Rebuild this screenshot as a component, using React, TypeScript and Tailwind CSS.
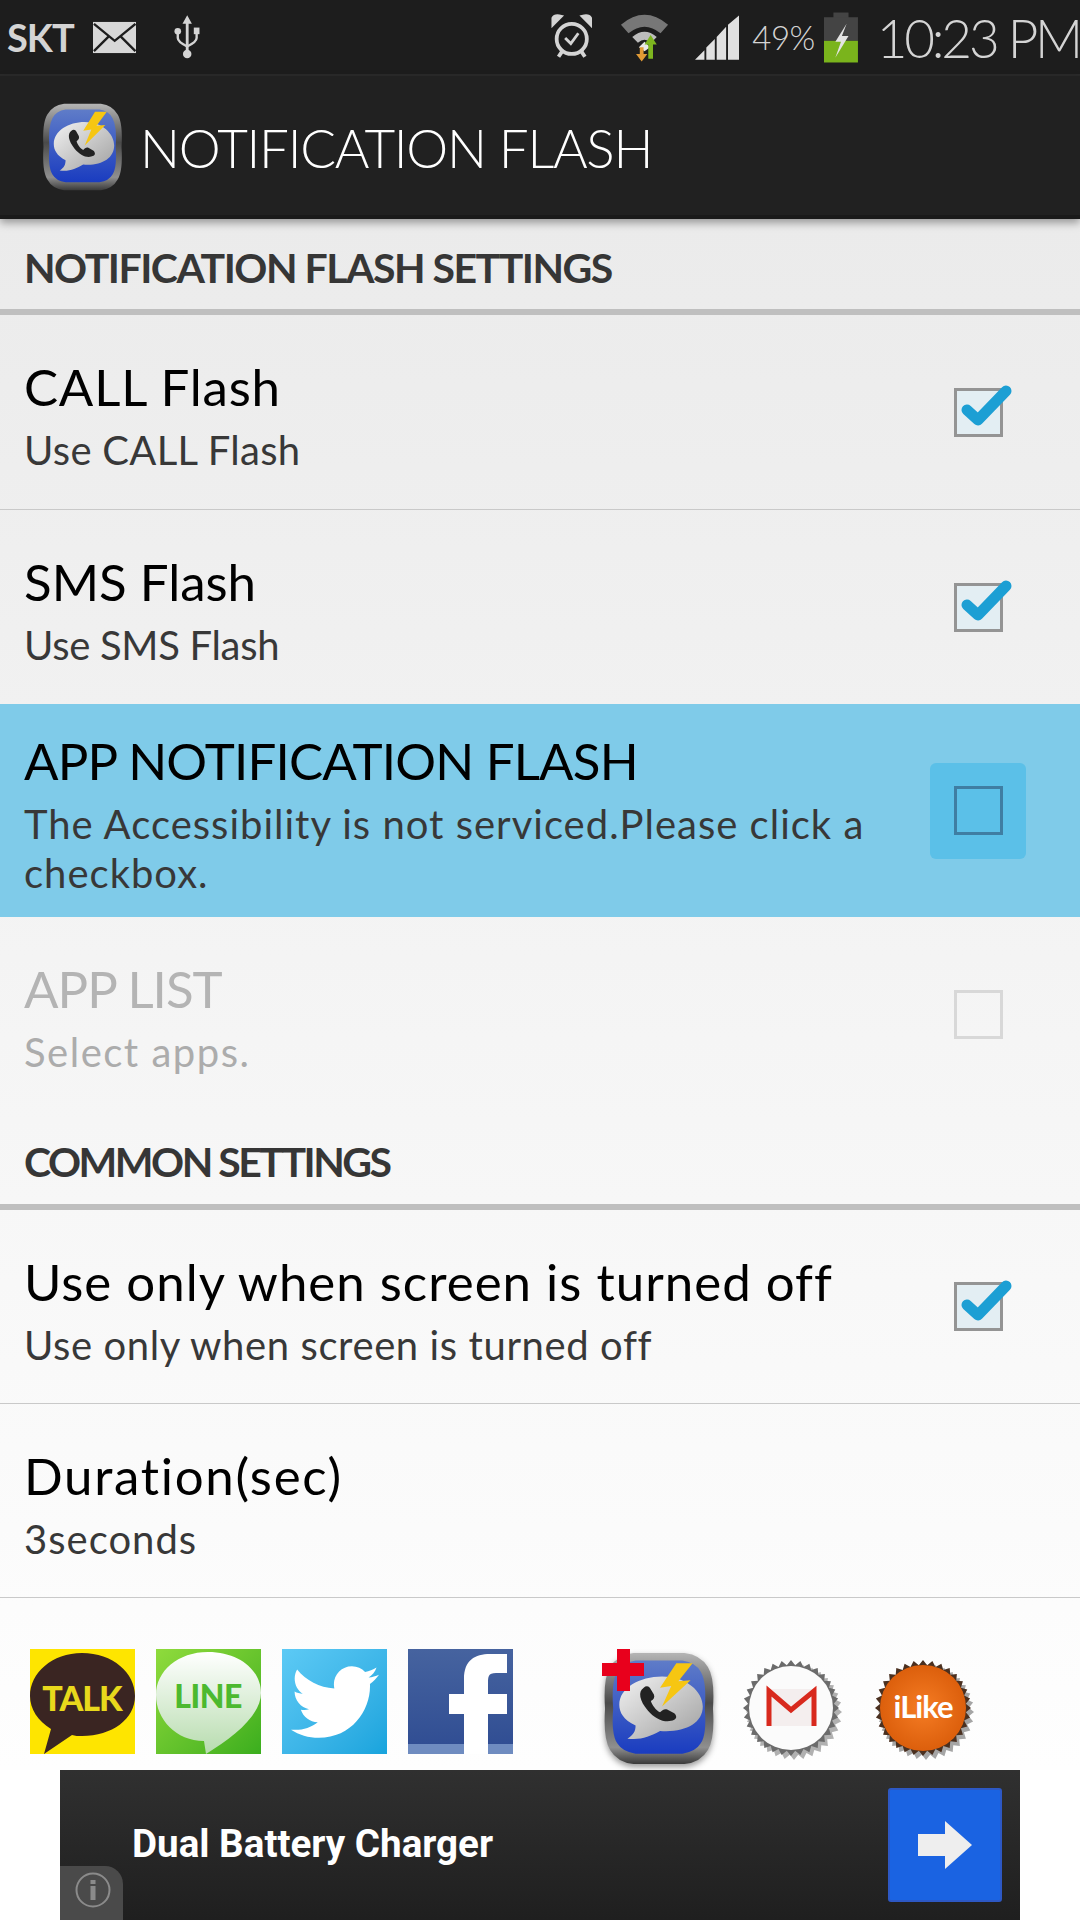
import React from "react";
import { FaTwitter } from "react-icons/fa";

const font = "font-['Lato','Liberation_Sans',sans-serif]";

function AppLogo({ className, id }: { className?: string; id: string }) {
  return (
    <svg viewBox="0 0 110 120" preserveAspectRatio="none" className={className}>
      <defs>
        <linearGradient id={`rim${id}`} x1="0" y1="0" x2="0" y2="1">
          <stop offset="0" stopColor="#b5b5b5" />
          <stop offset="0.45" stopColor="#4a4a4a" />
          <stop offset="0.85" stopColor="#8f8f8f" />
          <stop offset="1" stopColor="#3a3a3a" />
        </linearGradient>
        <linearGradient id={`blue${id}`} x1="0" y1="0" x2="0" y2="1">
          <stop offset="0" stopColor="#5f7cc8" />
          <stop offset="1" stopColor="#1a3cc0" />
        </linearGradient>
        <linearGradient id={`bubble${id}`} x1="0" y1="0" x2="1" y2="1">
          <stop offset="0" stopColor="#f2f2f2" />
          <stop offset="1" stopColor="#a0a0a0" />
        </linearGradient>
      </defs>
      <path d="M30 1H80Q96 3 103 16Q110 28 108 60Q110 92 103 104Q96 117 80 119H30Q14 117 7 104Q0 92 2 60Q0 28 7 16Q14 3 30 1Z" fill={`url(#rim${id})`} />
      <path d="M32 9H78Q91 11 96 21Q102 32 100 60Q102 88 96 97Q91 106 78 108H32Q19 106 14 97Q8 88 10 60Q8 32 14 21Q19 11 32 9Z" fill={`url(#blue${id})`} />
      <path d="M58 26C82 26 98 42 98 58C98 76 80 86 56 84C46 90 36 94 24 92C30 88 32 84 32 78C20 72 16 64 16 56C16 38 36 26 58 26Z" fill={`url(#bubble${id})`} />
      <path d="M40 38C34 42 36 52 44 62C52 72 62 76 70 72C73 70 72 67 70 65L63 61C60 60 58 62 56 64C52 62 48 56 47 52C50 50 51 48 50 45L46 38C44 36 42 36 40 38Z" fill="#222" />
      <path d="M72 12L56 38L67 36L58 58L86 30L74 31L88 12Z" fill="#f6c612" />
    </svg>
  );
}

function capPoints(teeth: number, outer: number, inner: number) {
  const pts: string[] = [];
  for (let i = 0; i < teeth * 2; i++) {
    const r = i % 2 === 0 ? outer : inner;
    const a = (Math.PI * i) / teeth;
    pts.push(`${(50 + r * Math.cos(a)).toFixed(1)},${(50 + r * Math.sin(a)).toFixed(1)}`);
  }
  return pts.join(" ");
}

function GmailCap() {
  return (
    <svg viewBox="0 0 104 104" className="w-[104px] h-[104px] ml-[26px] mt-[9px]">
      <polygon points={capPoints(32, 48, 43)} fill="#000" opacity="0.3" transform="translate(3 4)" />
      <polygon points={capPoints(32, 48, 43)} fill="#6b6b6b" />
      <circle cx="50" cy="50" r="42" fill="#fbfbfb" />
      <rect x="26" y="31" width="49" height="37" fill="#f4eeee" />
      <path d="M28 68V33L50 52L73 33V68" fill="none" stroke="#d8291d" strokeWidth="5" />
    </svg>
  );
}

function ILikeCap() {
  return (
    <svg viewBox="0 0 104 104" className="w-[104px] h-[104px] ml-[28px] mt-[9px]">
      <defs>
        <radialGradient id="orange">
          <stop offset="0" stopColor="#f57c24" />
          <stop offset="1" stopColor="#dc5f0c" />
        </radialGradient>
      </defs>
      <polygon points={capPoints(32, 48, 43)} fill="#000" opacity="0.35" transform="translate(3 4)" />
      <polygon points={capPoints(32, 48, 43)} fill="#4a3020" />
      <circle cx="50" cy="50" r="43" fill="url(#orange)" />
      <text x="50" y="60" textAnchor="middle" fontFamily="Lato, sans-serif" fontWeight="700" fontSize="31" letterSpacing="-1" fill="#fff">iLike</text>
    </svg>
  );
}

function Check({ on, dim, active }: { on?: boolean; dim?: boolean; active?: boolean }) {
  const border = active ? "border-[#3f7ea3]" : dim ? "border-[#d8d8d8]" : "border-[#949494]";
  return (
    <div className={`relative w-[96px] h-[96px] flex items-center justify-center rounded-md ${active ? "bg-[#5bc0e8]" : ""}`}>
      <div className={`w-[49px] h-[49px] border-[3px] ${border} ${on ? "bg-[#e3eef3]" : ""}`} />
      {on && (
        <svg viewBox="0 0 56 44" className="absolute left-[29px] top-[18px] w-[56px] h-[44px]">
          <path d="M8 28L19 38L47 9" fill="none" stroke="#1c9fd4" strokeWidth="11" strokeLinecap="round" strokeLinejoin="round" />
        </svg>
      )}
    </div>
  );
}

function Row({ title, sub, h, on, dim, active, line, check = true, tt, st }: {
  title: string; sub: string; h: string; on?: boolean; dim?: boolean; active?: boolean; line?: boolean; check?: boolean; tt: string; st: string;
}) {
  return (
    <div className={`${h} flex items-center pl-[24px] pr-[54px] ${line ? "border-b border-[#c9c9c9]" : ""} ${active ? "bg-[#7fcbe9]" : ""}`}>
      <div className="flex-1 min-w-0 pt-[7px]">
        <div className={`text-[51px] leading-[62px] ${tt} ${dim ? "text-[#b4b4b4]" : "text-black"}`}>{title}</div>
        <div className={`text-[40px] leading-[49px] mt-[8px] ${st} ${dim ? "text-[#acacac]" : "text-[#383838]"}`}>{sub}</div>
      </div>
      {check && <Check on={on} dim={dim} active={active} />}
    </div>
  );
}

function SectionHead({ text, h, className }: { text: string; h: string; className: string }) {
  return (
    <div className={`${h} flex items-end pl-[24px] border-b-[6px] border-[#bfbfbf] ${className}`}>
      <span className="text-[41px] leading-[48px] font-bold text-[#363636]">{text}</span>
    </div>
  );
}

function StatusBar() {
  return (
    <div className="h-[76px] bg-[#1d1d1d] border-b-2 border-[#2a2a2a] flex items-center text-[#d4d4d4] overflow-hidden">
      <span className="ml-[7px] text-[38px] font-bold leading-none tracking-[-1px]">SKT</span>
      <svg viewBox="0 0 46 33" className="ml-[19px] w-[46px] h-[33px]">
        <rect width="46" height="33" fill="#d8d8d8" />
        <path d="M1 2L23 20L45 2M1 31L17 15M45 31L29 15" fill="none" stroke="#1d1d1d" strokeWidth="2.5" />
      </svg>
      <svg viewBox="0 0 28 46" className="ml-[38px] w-[28px] h-[46px]">
        <path d="M14 0L19 9H9ZM12.5 8H15.5V38H12.5Z" fill="#d4d4d4" />
        <circle cx="14" cy="41" r="4.5" fill="#d4d4d4" />
        <circle cx="4" cy="17" r="3.5" fill="#d4d4d4" />
        <rect x="21" y="13" width="6" height="7" fill="#d4d4d4" />
        <path d="M4 19V24Q4 28 14 33Q24 28 24 24V18" fill="none" stroke="#d4d4d4" strokeWidth="2.5" />
      </svg>
      <svg viewBox="0 0 44 50" className="ml-[351px] w-[44px] h-[50px]">
        <circle cx="22" cy="27" r="16" fill="none" stroke="#d4d4d4" strokeWidth="4" />
        <path d="M2 12L11 3Q4 1 2 5ZM42 12L33 3Q40 1 42 5Z" fill="#d4d4d4" stroke="#d4d4d4" strokeWidth="3" />
        <path d="M8 46L12 40M36 46L32 40" stroke="#d4d4d4" strokeWidth="4" />
        <path d="M15 26L21 32L29 21" fill="none" stroke="#d4d4d4" strokeWidth="3" />
      </svg>
      <svg viewBox="0 0 52 52" className="ml-[27px] w-[52px] h-[52px]">
        <path d="M1 13Q26 -8 51 13L43 22Q26 8 9 22Z" fill="#777" />
        <path d="M13 26Q26 15 39 26L33 32Q26 26 19 32Z" fill="#bdbdbd" />
        <path d="M26 31L32 37L26 41L20 37Z" fill="#e8e8e8" />
        <path d="M21 37H25V44H29L23 52L17 44H21Z" fill="#e19a35" />
        <path d="M30 49V34H26L32.5 24L39 34H35V49Z" fill="#7db51f" />
      </svg>
      <svg viewBox="0 0 47 47" className="ml-[26px] w-[47px] h-[47px]">
        <path d="M0 47L10 37V47ZM12 34L21 25V47H12ZM23 23L33 12V47H23ZM35 10L47 0V47H35Z" fill="#e0e0e0" />
      </svg>
      <span className="ml-[13px] text-[33px] font-light leading-none tracking-[-0.5px]">49%</span>
      <svg viewBox="0 0 36 53" className="ml-[9px] w-[36px] h-[53px]">
        <rect x="10" y="0" width="16" height="6" fill="#444" />
        <rect x="0" y="5" width="36" height="25" fill="#444" />
        <rect x="0" y="30" width="36" height="23" fill="#7ab41c" />
        <path d="M24 12L12 31H18L12 48L26 25H19Z" fill="#e4e4e4" />
      </svg>
      <span className="ml-[19px] text-[53px] font-light leading-none tracking-[-3.2px] whitespace-nowrap">10:23 PM</span>
    </div>
  );
}

function ActionBar() {
  return (
    <div className="h-[143px] bg-[#212121] flex items-center border-b-[4px] border-[#1a1a1a] shadow-[0_4px_8px_rgba(0,0,0,0.35)] relative">
      <AppLogo id="a" className="ml-[42px] mt-[3px] w-[81px] h-[88px]" />
      <span className="ml-[17px] mt-[4px] text-[53px] font-light text-white leading-none tracking-[-1.3px]">NOTIFICATION FLASH</span>
    </div>
  );
}

function SocialRow() {
  return (
    <div className="h-[168px] pt-[51px] flex items-start pl-[30px]">
      <div className="w-[105px] h-[105px] bg-[#fee500] overflow-hidden">
        <svg viewBox="0 0 105 105" className="w-full h-full">
          <path d="M52 4C83 4 105 24 105 47C105 70 82 87 52 87C48 87 45 87 42 86L14 105L21 80C8 72 0 60 0 47C0 24 22 4 52 4Z" fill="#3a2522" />
          <text x="52" y="62" textAnchor="middle" fontFamily="Lato, sans-serif" fontWeight="900" fontSize="34" letterSpacing="-1" fill="#e8d91c">TALK</text>
        </svg>
      </div>
      <div className="ml-[21px] w-[105px] h-[105px] bg-gradient-to-br from-[#8fdb3c] to-[#3aae1e] overflow-hidden">
        <svg viewBox="0 0 105 105" className="w-full h-full">
          <defs>
            <linearGradient id="lineb" x1="0" y1="0" x2="0" y2="1">
              <stop offset="0" stopColor="#ffffff" />
              <stop offset="1" stopColor="#b7dcae" />
            </linearGradient>
          </defs>
          <path d="M52 3C84 3 105 22 105 44C105 66 78 88 50 105L48 92C20 92 0 70 0 46C0 22 22 3 52 3Z" fill="url(#lineb)" />
          <text x="52" y="59" textAnchor="middle" fontFamily="Lato, sans-serif" fontWeight="900" fontSize="32" letterSpacing="-0.5" fill="#4cb92f">LINE</text>
        </svg>
      </div>
      <div className="ml-[21px] w-[105px] h-[105px] bg-gradient-to-br from-[#5ccaf5] to-[#17a4dd] flex items-center justify-center">
        <FaTwitter className="w-[88px] h-[88px] text-white" />
      </div>
      <div className="ml-[21px] w-[105px] h-[105px] bg-gradient-to-b from-[#46639f] to-[#2f4c92] overflow-hidden">
        <svg viewBox="0 0 105 105" className="w-full h-full">
          <rect x="0" y="95" width="105" height="10" fill="#6f8cc0" />
          <path d="M56 105V65H41V45H56V30C56 11 67 5 82 5H99V24H88C80 24 80 28 80 34V45H99V65H80V105Z" fill="#fff" />
        </svg>
      </div>
      <div className="relative ml-[89px] mt-[3px] w-[113px] h-[113px]">
        <AppLogo id="b" className="w-[112px] h-[113px] ml-[1px] drop-shadow-[0_3px_3px_rgba(0,0,0,0.4)]" />
        <svg viewBox="0 0 42 42" className="absolute left-0 top-[-3px] w-[42px] h-[42px]">
          <path d="M15 0H28V14H42V27H28V42H15V27H0V14H15Z" fill="#e8001c" />
        </svg>
      </div>
      <GmailCap />
      <ILikeCap />
    </div>
  );
}

function AdBanner() {
  return (
    <div className="relative ml-[60px] w-[960px] h-[150px] bg-gradient-to-b from-[#303030] to-[#1f1f1f] flex items-center justify-between pl-[72px] pr-[18px]">
      <span className="font-['Roboto',sans-serif] font-bold text-[38.6px] text-white leading-none -mt-[2px]">Dual Battery Charger</span>
      <div className="w-[114px] h-[114px] bg-[#1a63e2] border-2 border-[#2d58c4] rounded-[3px] flex items-center justify-center">
        <svg viewBox="0 0 54 48" className="w-[54px] h-[48px]">
          <path d="M0 13H27V0L54 24L27 48V35H0Z" fill="#eeeeee" />
        </svg>
      </div>
      <div className="absolute left-0 bottom-0 w-[63px] h-[54px] bg-[#4a4a4a] rounded-tr-[18px] flex items-start pl-[15px] pt-[6px]">
        <svg viewBox="0 0 36 36" className="w-[36px] h-[36px]">
          <circle cx="18" cy="18" r="16.5" fill="none" stroke="#8b8b8b" strokeWidth="2" />
          <rect x="15.5" y="14" width="5" height="14" fill="#8b8b8b" />
          <rect x="15.5" y="8" width="5" height="4" fill="#8b8b8b" />
        </svg>
      </div>
    </div>
  );
}

export default function App() {
  return (
    <div className={`${font} w-[1080px] h-[1920px] overflow-hidden bg-white`}>
      <StatusBar />
      <ActionBar />
      <div className="bg-gradient-to-b from-[#ebebeb] to-[#fefefe] h-[1551px]">
        <SectionHead text="NOTIFICATION FLASH SETTINGS" h="h-[96px]" className="pb-[17px] tracking-[-1.5px]" />
        <Row title="CALL Flash" sub="Use CALL Flash" h="h-[195px]" on line tt="tracking-[0.8px]" st="tracking-[0.3px]" />
        <Row title="SMS Flash" sub="Use SMS Flash" h="h-[194px]" on tt="tracking-[0px]" st="tracking-[-0.3px]" />
        <Row title="APP NOTIFICATION FLASH" sub="The Accessibility is not serviced.Please click a checkbox." h="h-[213px]" active tt="tracking-[-0.8px]" st="tracking-[1px]" />
        <Row title="APP LIST" sub="Select apps." h="h-[194px]" dim tt="tracking-[-1px]" st="tracking-[1.5px]" />
        <SectionHead text="COMMON SETTINGS" h="h-[99px]" className="pb-[18px] tracking-[-2.5px]" />
        <Row title="Use only when screen is turned off" sub="Use only when screen is turned off" h="h-[194px]" on line tt="tracking-[1px]" st="tracking-[0.6px]" />
        <Row title="Duration(sec)" sub="3seconds" h="h-[194px]" line check={false} tt="tracking-[1.7px]" st="tracking-[1px]" />
        <SocialRow />
      </div>
      <AdBanner />
    </div>
  );
}
